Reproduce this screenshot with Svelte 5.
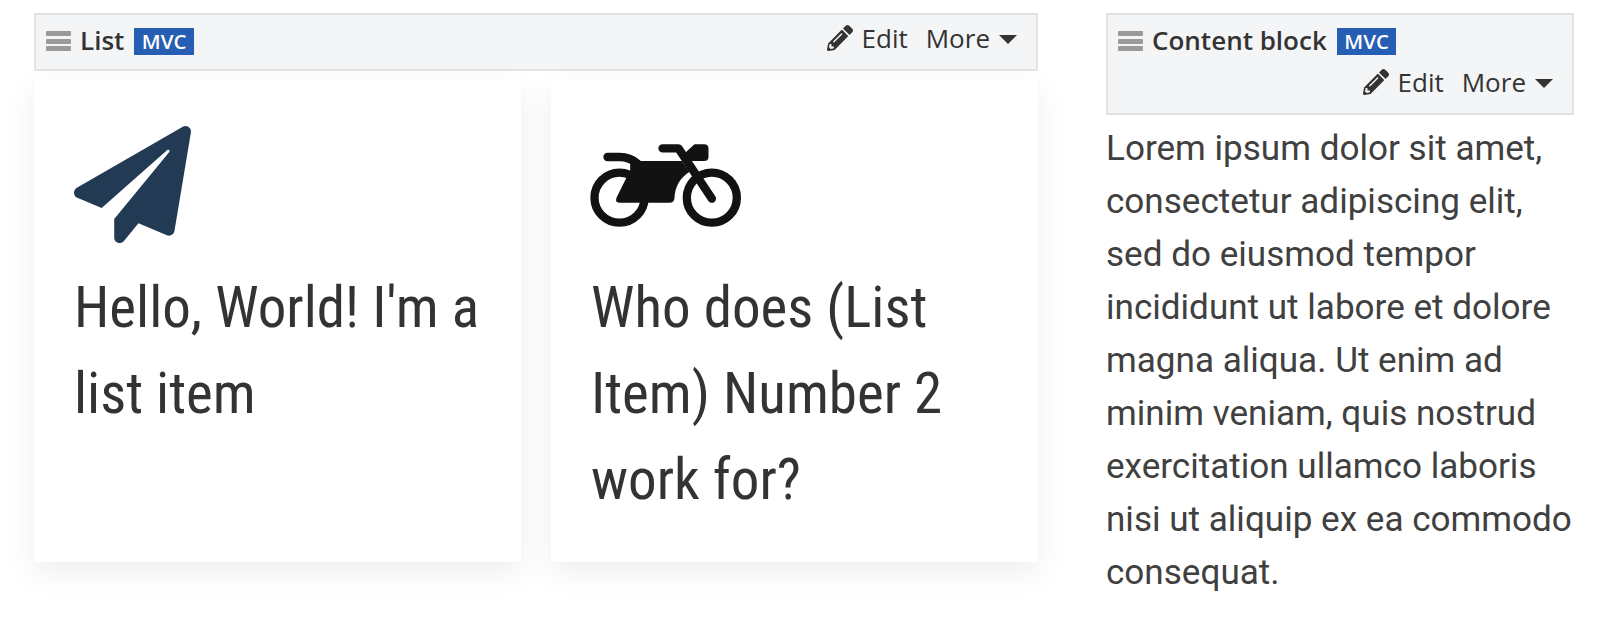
<script lang="ts">
  const cards = [
    { title: "Hello, World! I'm a list item", icon: 'plane' },
    { title: 'Who does (List Item) Number 2 work for?', icon: 'bike' },
  ];
  const lorem =
    'Lorem ipsum dolor sit amet, consectetur adipiscing elit, sed do eiusmod tempor incididunt ut labore et dolore magna aliqua. Ut enim ad minim veniam, quis nostrud exercitation ullamco laboris nisi ut aliquip ex ea commodo consequat.';
</script>

{#snippet toolbar(title)}
  <div class="toolbar">
    <div class="toolbar__left">
      <span class="bars" aria-hidden="true"><i></i><i></i><i></i></span>
      <strong class="toolbar__title">{title}</strong>
      <span class="badge">MVC</span>
    </div>
    <div class="toolbar__actions">
      <span class="action">
        <svg class="pencil" viewBox="0 0 512 512" aria-hidden="true">
          <path d="M497.9 142.1l-46.1 46.1c-4.7 4.7-12.3 4.7-17 0l-111-111c-4.7-4.7-4.7-12.3 0-17l46.1-46.1c18.7-18.7 49.1-18.7 67.9 0l60.1 60.1c18.8 18.7 18.8 49.1 0 67.9zM284.2 99.8L21.6 362.4.4 483.9c-2.9 16.4 11.4 30.6 27.8 27.8l121.5-21.3 262.6-262.6c4.7-4.7 4.7-12.3 0-17l-111-111c-4.8-4.7-12.4-4.7-17.1 0zM124.1 339.9c-5.5-5.5-5.5-14.3 0-19.8l154-154c5.5-5.5 14.3-5.5 19.8 0s5.5 14.3 0 19.8l-154 154c-5.5 5.5-14.3 5.5-19.8 0zM88 424h48v36.3l-64.5 11.3-31.1-31.1L51.7 376H88v48z" />
        </svg>
        Edit
      </span>
      <span class="action action--more">More <span class="caret"></span></span>
    </div>
  </div>
{/snippet}

<div class="page">
  <section class="list">
    {@render toolbar('List')}
    <div class="cards">
      {#each cards as card}
        <article class="card">
          <div class="card__icon">
            {#if card.icon === 'plane'}
              <svg class="plane" viewBox="0 0 512 512" aria-hidden="true">
                <path d="M476 3.2L12.5 270.6c-18.1 10.4-15.8 35.6 2.2 43.2L121 358.4l287.3-253.2c5.5-4.9 13.3 2.6 8.6 8.3L176 407v80.5c0 23.6 28.5 32.9 42.5 15.8L282 426l124.6 52.2c14.2 6 30.4-2.9 33-18.2l72-432C515 7.8 493.3-6.8 476 3.2z" />
              </svg>
            {:else}
              <svg class="bike" viewBox="33 33 452 258" aria-hidden="true">
                <circle cx="118" cy="200" r="75" />
                <circle cx="395" cy="200" r="75" />
                <path d="M82 78 H118 Q150 78 172 98" />
                <path d="M247 52 H295 L395 203" />
                <path class="solid" d="M150 90 H305 L328 122 Q285 150 283 200 Q282 215 268 215 H118 Q102 215 110 198 L150 118 Z" />
                <path class="solid" d="M310 70 L343 40 H372 Q385 40 385 53 V78 Q385 90 372 90 H330 Z" />
              </svg>
            {/if}
          </div>
          <h2 class="card__title">{card.title}</h2>
        </article>
      {/each}
    </div>
  </section>

  <section class="block">
    {@render toolbar('Content block')}
    <p class="block__text">{lorem}</p>
  </section>
</div>

<style>
  :global(body) {
    margin: 0;
    background: #fff;
  }

  .page {
    display: flex;
    gap: 68px;
    padding: 13px 32px 0 34px;
    height: 605px;
    overflow: hidden;
  }

  .list {
    width: 1004px;
    flex: none;
  }

  .block {
    width: 468px;
    flex: none;
  }

  .toolbar {
    display: flex;
    flex-wrap: wrap;
    justify-content: space-between;
    box-sizing: border-box;
    padding: 4px 19px 6px 10px;
    background: #f4f5f7;
    border: 2px solid #e3e4e6;
    font-family: 'Open Sans', sans-serif;
    color: #333;
  }

  .toolbar__left {
    display: flex;
    align-items: center;
    height: 44px;
  }

  .bars {
    display: flex;
    flex-direction: column;
    gap: 2.5px;
    width: 25px;
    margin-right: 9px;
  }

  .bars i {
    display: block;
    height: 5px;
    border-radius: 1px;
    background: #9a9a9a;
  }

  .toolbar__title {
    font-size: 26px;
    font-weight: 600;
    line-height: 42px;
    margin: 0 10px 2px 0;
  }

  .badge {
    background: #255eb3;
    color: #fff;
    font-size: 20.5px;
    font-weight: 600;
    line-height: 27px;
    padding: 0 7.5px;
  }

  .toolbar__actions {
    display: flex;
    align-items: center;
    justify-content: flex-end;
    gap: 18px;
    box-sizing: border-box;
    height: 44px;
    padding-bottom: 6px;
    margin-left: auto;
    font-size: 26px;
  }

  .action {
    display: flex;
    align-items: center;
    gap: 9px;
  }

  .action--more {
    gap: 9px;
  }

  .pencil {
    width: 26px;
    height: 26px;
    fill: #333;
  }

  .caret {
    width: 0;
    height: 0;
    margin-top: 2px;
    border-left: 9px solid transparent;
    border-right: 9px solid transparent;
    border-top: 9px solid #333;
  }

  .cards {
    display: grid;
    grid-template-columns: 1fr 1fr;
    gap: 30px;
    margin-top: 8px;
  }

  .card {
    height: 483px;
    box-sizing: border-box;
    padding: 47px 30px 0 40px;
    background: #fff;
    box-shadow: 0 10px 30px rgba(0, 0, 0, 0.07);
  }

  .card__icon {
    display: flex;
    align-items: center;
    height: 117px;
  }

  .plane {
    width: 117px;
    height: 117px;
    fill: #233a55;
  }

  .bike {
    width: 151px;
    height: 86px;
    overflow: visible;
    fill: none;
    stroke: #121212;
    stroke-width: 25;
    stroke-linecap: round;
    stroke-linejoin: round;
  }

  .bike .solid {
    fill: #121212;
    stroke: none;
  }

  .card__title {
    margin: 22px 0 0;
    font-family: Roboto, sans-serif;
    font-stretch: 75%;
    font-size: 57px;
    font-weight: 400;
    line-height: 86px;
    color: #333;
  }

  .block__text {
    margin: 7px 0 0;
    font-family: Roboto, sans-serif;
    font-size: 35.1px;
    line-height: 53px;
    color: #404040;
  }
</style>
